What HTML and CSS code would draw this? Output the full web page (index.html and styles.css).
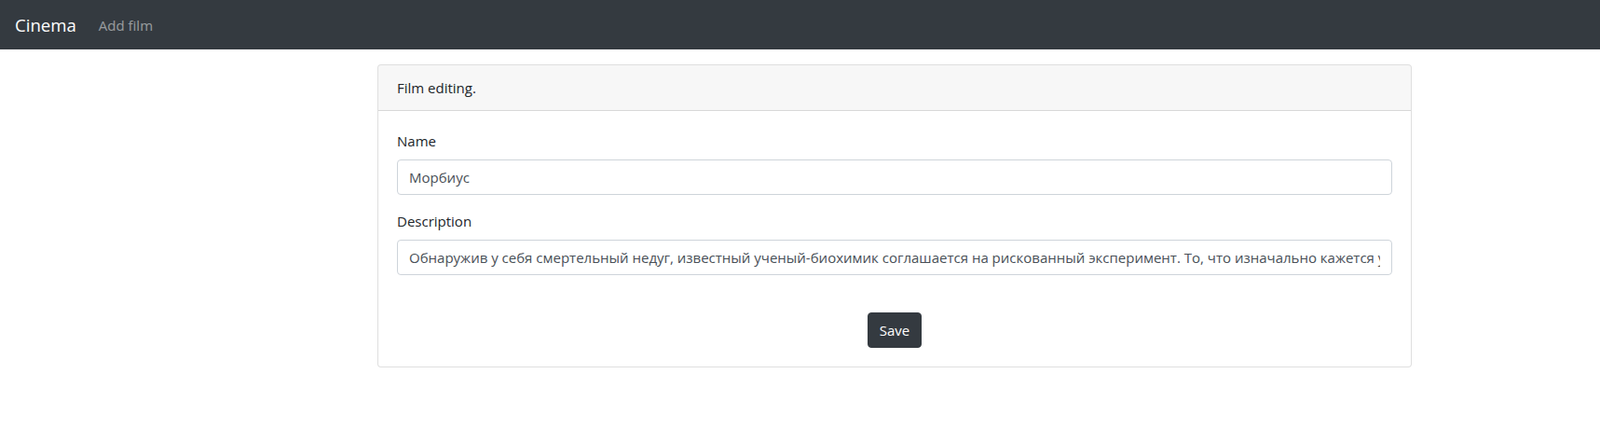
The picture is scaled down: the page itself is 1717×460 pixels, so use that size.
FILE: index.html
```html
<!DOCTYPE html>
<html lang="ru">
<head>
<meta charset="utf-8">
<title>Cinema</title>
<link rel="stylesheet" href="styles.css">
</head>
<body>
<nav class="navbar">
  <a class="brand" href="#">Cinema</a>
  <a class="nav-link" href="#">Add film</a>
</nav>
<main class="page">
  <div class="card">
    <div class="card-header">Film editing.</div>
    <form class="card-body">
      <div class="form-group">
        <label class="label" for="name">Name</label>
        <input class="form-control" id="name" type="text" value="Морбиус">
      </div>
      <div class="form-group">
        <label class="label" for="desc">Description</label>
        <input class="form-control" id="desc" type="text" value="Обнаружив у себя смертельный недуг, известный ученый-биохимик соглашается на рискованный эксперимент. То, что изначально кажется успехом, оборачивается для него настоящим проклятием.">
      </div>
      <div class="actions">
        <button class="btn" type="button">Save</button>
      </div>
    </form>
  </div>
</main>
</body>
</html>
```
FILE: styles.css
```css
* { box-sizing: border-box; }
body {
  margin: 0;
  font-family: "Open Sans", "Noto Sans", sans-serif;
  font-size: 15px;
  line-height: 24px;
  color: #212529;
  background: #fff;
}
.navbar {
  display: flex;
  align-items: center;
  height: 53px;
  padding: 0 16px;
  background: #343a40;
}
.brand {
  font-size: 18.6px;
  color: #fff;
  text-decoration: none;
  margin-right: 16px;
}
.nav-link {
  padding: 0 8px;
  color: rgba(255,255,255,.5);
  text-decoration: none;
}
.page {
  padding: 16px 0 0 405px;
}
.card {
  width: 1110px;
  border: 1px solid rgba(0,0,0,.125);
  border-radius: 4px;
  background: #fff;
}
.card-header {
  padding: 12px 20px;
  background: rgba(0,0,0,.03);
  border-bottom: 1px solid rgba(0,0,0,.125);
  border-radius: 3px 3px 0 0;
}
.card-body {
  display: block;
  padding: 20px;
  margin: 0;
}
.form-group {
  margin-bottom: 16px;
}
.label {
  display: block;
  margin-bottom: 8px;
}
.form-control {
  display: block;
  width: 100%;
  height: 38px;
  padding: 6px 12px;
  font-family: inherit;
  font-size: 15px;
  line-height: 24px;
  color: #495057;
  background: #fff;
  border: 1px solid #ced4da;
  border-radius: 4px;
  outline: none;
}
.actions {
  display: flex;
  justify-content: center;
  padding-top: 24px;
}
.btn {
  height: 38px;
  padding: 6px 12px;
  font-family: inherit;
  font-size: 15px;
  line-height: 24px;
  color: #fff;
  background: #343a40;
  border: 1px solid #343a40;
  border-radius: 4px;
}
```
